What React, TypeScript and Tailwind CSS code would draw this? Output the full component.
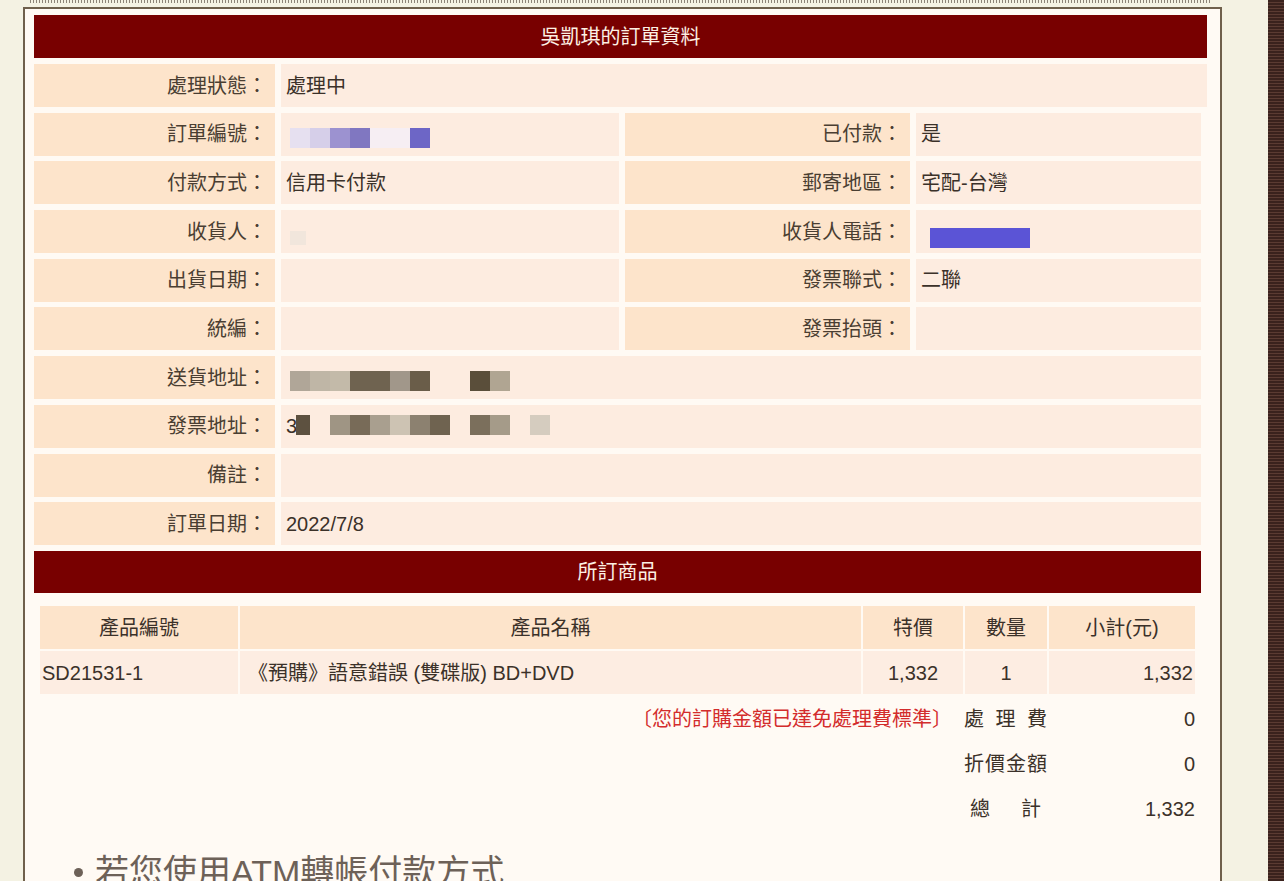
import React from "react";

type Cell = { label: string; value?: React.ReactNode };

const FONT = { fontFamily: '"Liberation Sans", "Noto Sans CJK TC", sans-serif' };

// mosaic blocks standing in for the blurred personal data
const ORDER_NO = [
  "w-[20px] bg-[#e6e0f0]",
  "w-[20px] bg-[#d6cfe9]",
  "w-[20px] bg-[#9c92d0]",
  "w-[20px] bg-[#8077c1]",
  "w-[40px] bg-[#f6eef3]",
  "w-[20px] bg-[#6d66c6]",
];
const SHIP_ADDR = [
  "w-[20px] bg-[#b0a698]",
  "w-[20px] bg-[#bfb6a6]",
  "w-[20px] bg-[#c3baa9]",
  "w-[20px] bg-[#6f6350]",
  "w-[20px] bg-[#6f6350]",
  "w-[20px] bg-[#a1978a]",
  "w-[20px] bg-[#6a5d49]",
  "w-[40px] bg-transparent",
  "w-[20px] bg-[#5a4e3a]",
  "w-[20px] bg-[#b0a592]",
];
const BILL_ADDR = [
  "w-[14px] bg-[#5d5140]",
  "w-[20px] bg-transparent",
  "w-[20px] bg-[#9f9584]",
  "w-[20px] bg-[#786b58]",
  "w-[20px] bg-[#a99f8f]",
  "w-[20px] bg-[#cdc3b3]",
  "w-[20px] bg-[#8c8170]",
  "w-[20px] bg-[#6f6350]",
  "w-[20px] bg-transparent",
  "w-[20px] bg-[#7b6f5c]",
  "w-[20px] bg-[#a59b89]",
  "w-[20px] bg-transparent",
  "w-[20px] bg-[#d5ccbf]",
];

function Mosaic({ blocks, className = "" }: { blocks: string[]; className?: string }) {
  return (
    <div className={"flex h-[20px] " + className}>
      {blocks.map((b, i) => (
        <div key={i} className={"h-full " + b} />
      ))}
    </div>
  );
}

function Label({ text }: { text: string }) {
  return (
    <div className="flex h-[43px] items-center justify-end bg-[#fde4cb] pr-[8px] text-[#4a3e32]">{text}：</div>
  );
}

function Value({ children, span = false }: { children?: React.ReactNode; span?: boolean }) {
  return (
    <div className={"flex h-[43px] items-center bg-[#fdece0] pl-[5px] text-[#3b3129] " + (span ? "col-span-3" : "")}>
      {children}
    </div>
  );
}

function Pair({ left, right }: { left: Cell; right?: Cell }) {
  if (!right) {
    return (
      <>
        <Label text={left.label} />
        <Value span>{left.value}</Value>
      </>
    );
  }
  return (
    <>
      <Label text={left.label} />
      <Value>{left.value}</Value>
      <Label text={right.label} />
      <Value>{right.value}</Value>
    </>
  );
}

function Spread({ chars }: { chars: string[] }) {
  return (
    <div className="flex w-[83px] justify-between text-[#3b3129]">
      {chars.map((c, i) => (
        <span key={i}>{c}</span>
      ))}
    </div>
  );
}

export default function App() {
  return (
    <div className="fixed inset-0 flex overflow-hidden bg-[#f4f2e3] text-[20px]" style={FONT}>
      <div className="w-[23px] shrink-0" />
      <div className="flex w-[1199px] shrink-0 flex-col">
        <div className="ml-[7px] mr-[12px] h-[3px] shrink-0 bg-[image:repeating-linear-gradient(90deg,#8d8478_0px,#8d8478_1px,transparent_1px,transparent_3px)]" />
        <div className="mt-[4px] flex-1 border-2 border-b-0 border-[#6f604c] bg-[#fffaf4] pl-[9px] pr-[13px] pt-[6px]">
          <div className="flex h-[43px] items-center justify-center bg-[#780000] text-[#fdf0e4]">吳凱琪的訂單資料</div>

          <div className="mt-[6px] grid grid-cols-[241px_1fr] gap-x-[6px]">
            <Label text="處理狀態" />
            <Value>處理中</Value>
          </div>

          <div className="mt-[5.7px] grid w-[1167px] grid-cols-[241px_338px_285px_1fr] gap-x-[6px] gap-y-[5.7px]">
            <Pair
              left={{ label: "訂單編號", value: <Mosaic blocks={ORDER_NO} className="ml-[4px] mt-[8px]" /> }}
              right={{ label: "已付款", value: "是" }}
            />
            <Pair left={{ label: "付款方式", value: "信用卡付款" }} right={{ label: "郵寄地區", value: "宅配-台灣" }} />
            <Pair
              left={{ label: "收貨人", value: <div className="ml-[4px] mt-[12px] h-[14px] w-[16px] bg-[#f1e6dc]" /> }}
              right={{
                label: "收貨人電話",
                value: <div className="ml-[9px] mt-[12px] h-[20px] w-[100px] bg-[#5b54d6]" />,
              }}
            />
            <Pair left={{ label: "出貨日期" }} right={{ label: "發票聯式", value: "二聯" }} />
            <Pair left={{ label: "統編" }} right={{ label: "發票抬頭" }} />
            <Pair left={{ label: "送貨地址", value: <Mosaic blocks={SHIP_ADDR} className="ml-[4px] mt-[6px]" /> }} />
            <Pair
              left={{
                label: "發票地址",
                value: (
                  <div className="flex items-center">
                    <span>3</span>
                    <Mosaic blocks={BILL_ADDR} className="-ml-[1px] mt-[-3px]" />
                  </div>
                ),
              }}
            />
            <Pair left={{ label: "備註" }} />
            <Pair left={{ label: "訂單日期", value: "2022/7/8" }} />
          </div>

          <div className="mt-[6px] flex h-[42px] w-[1167px] items-center justify-center bg-[#780000] text-[#fdf0e4]">
            所訂商品
          </div>

          <div className="ml-[6px] mt-[13px] grid w-[1155px] grid-cols-[198px_621px_100px_82px_1fr] gap-[2px] text-[#3b3129]">
            <div className="flex h-[43px] items-center justify-center bg-[#fde4cb]">產品編號</div>
            <div className="flex h-[43px] items-center justify-center bg-[#fde4cb]">產品名稱</div>
            <div className="flex h-[43px] items-center justify-center bg-[#fde4cb]">特價</div>
            <div className="flex h-[43px] items-center justify-center bg-[#fde4cb]">數量</div>
            <div className="flex h-[43px] items-center justify-center bg-[#fde4cb]">小計(元)</div>
            <div className="flex h-[43px] items-center bg-[#fdede2] pl-[2px]">SD21531-1</div>
            <div className="flex h-[43px] items-center bg-[#fdede2] pl-[8px]">《預購》語意錯誤 (雙碟版) BD+DVD</div>
            <div className="flex h-[43px] items-center justify-center bg-[#fdede2]">1,332</div>
            <div className="flex h-[43px] items-center justify-center bg-[#fdede2]">1</div>
            <div className="flex h-[43px] items-center justify-end bg-[#fdede2] pr-[2px]">1,332</div>
          </div>

          <div className="mt-[2px] flex w-[1161px] flex-col">
            <div className="flex h-[45px] items-center justify-end">
              <span className="mr-[12px] text-[#d32c2c]">〔您的訂購金額已達免處理費標準〕</span>
              <Spread chars={["處", "理", "費"]} />
              <span className="w-[148px] text-right text-[#3b3129]">0</span>
            </div>
            <div className="flex h-[45px] items-center justify-end">
              <Spread chars={["折", "價", "金", "額"]} />
              <span className="w-[148px] text-right text-[#3b3129]">0</span>
            </div>
            <div className="flex h-[45px] items-center justify-end">
              <div className="flex w-[83px] justify-between px-[6px] text-[#3b3129]">
                <span>總</span>
                <span>計</span>
              </div>
              <span className="w-[148px] text-right text-[#3b3129]">1,332</span>
            </div>
          </div>

          <div className="ml-[40px] mt-[24px] flex items-center gap-[12px] text-[34px] leading-none text-[#6d6158]">
            <span className="h-[9px] w-[9px] shrink-0 rounded-full bg-[#6d6158]" />
            <span>若您使用ATM轉帳付款方式</span>
          </div>
        </div>
      </div>
      <div className="w-[46px] shrink-0" />
      <div className="w-[16px] shrink-0 bg-[#432a24] bg-[image:repeating-linear-gradient(180deg,#3a221d_0px,#3a221d_2px,#5b3b32_2px,#5b3b32_3px)]" />
    </div>
  );
}
